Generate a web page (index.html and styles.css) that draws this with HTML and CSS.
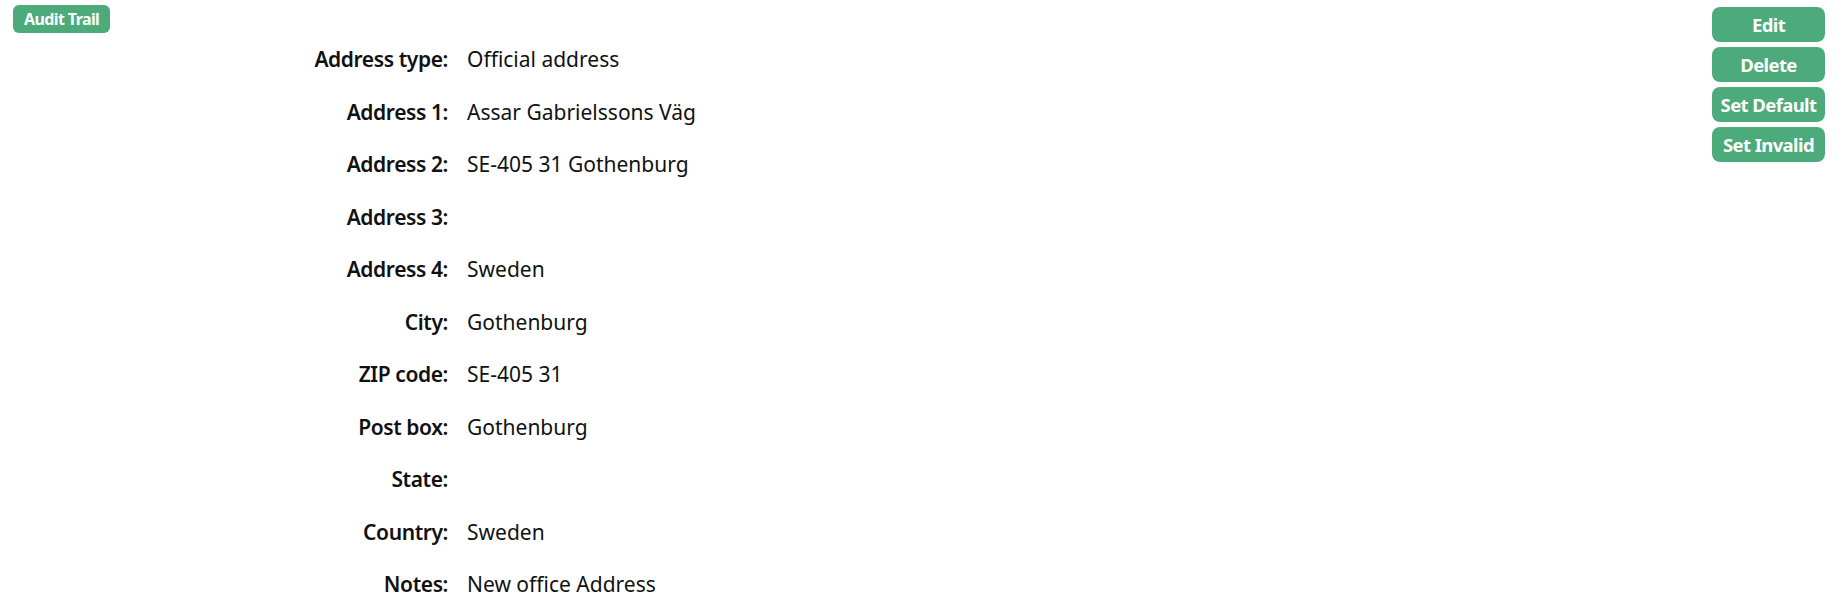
FILE: index.html
```html
<!DOCTYPE html>
<html lang="en">
<head>
  <meta charset="UTF-8" />
  <title>Address Details</title>
  <link rel="stylesheet" href="styles.css">
</head>
<body>

  <div class="page">
    <!-- Address details -->
    <div class="main">
      <button class="btn btn-audit">Audit Trail</button>

      <div class="details">
        <div class="label">Address type:</div><div class="value">Official address</div>
        <div class="label">Address 1:</div><div class="value">Assar Gabrielssons Väg</div>
        <div class="label">Address 2:</div><div class="value">SE-405 31 Gothenburg</div>
        <div class="label">Address 3:</div><div class="value"></div>
        <div class="label">Address 4:</div><div class="value">Sweden</div>
        <div class="label">City:</div><div class="value">Gothenburg</div>
        <div class="label">ZIP code:</div><div class="value">SE-405 31</div>
        <div class="label">Post box:</div><div class="value">Gothenburg</div>
        <div class="label">State:</div><div class="value"></div>
        <div class="label">Country:</div><div class="value">Sweden</div>
        <div class="label">Notes:</div><div class="value">New office Address</div>
      </div>
    </div>

    <!-- Actions -->
    <div class="actions">
      <button class="btn btn-action">Edit</button>
      <button class="btn btn-action">Delete</button>
      <button class="btn btn-action">Set Default</button>
      <button class="btn btn-action">Set Invalid</button>
    </div>
  </div>

</body>
</html>
```

FILE: styles.css
```css
body, html {
  margin: 0;
  padding: 0;
  background: #fff;
  color: #111;
  font-family: "Noto Sans", Arial, sans-serif;
}

.page {
  display: flex;
  align-items: flex-start;
}

.main {
  flex: 1;
}

.btn {
  background-color: #4caa7b;
  color: white;
  border: none;
  font-family: inherit;
  font-weight: bold;
  cursor: pointer;
  white-space: nowrap;
}

.btn-audit {
  display: block;
  margin: 5px 0 0 13px;
  height: 28px;
  padding: 0 11px;
  font-size: 16px;
  border-radius: 6px;
  letter-spacing: -0.6px;
}

.details {
  display: grid;
  grid-template-columns: 448px auto;
  column-gap: 19px;
  grid-auto-rows: 52.5px;
  margin-top: 12px;
  font-size: 21px;
  line-height: 28px;
}

.label {
  text-align: right;
  font-weight: 600;
  letter-spacing: -0.4px;
}

.actions {
  display: flex;
  flex-direction: column;
  align-items: flex-start;
  gap: 5px;
  padding: 7px 18px 0 0;
}

.btn-action {
  min-width: 113px;
  height: 35px;
  padding: 0 8px;
  font-size: 18.5px;
  border-radius: 8px;
  letter-spacing: -0.6px;
}
```
